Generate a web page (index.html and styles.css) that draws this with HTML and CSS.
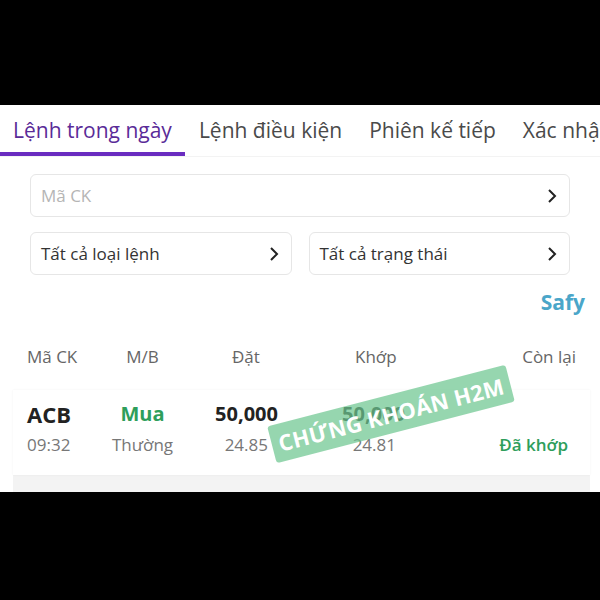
FILE: index.html
```html
<!DOCTYPE html>
<html lang="vi">
<head>
<meta charset="utf-8">
<link rel="stylesheet" href="styles.css">
</head>
<body>
<div class="bar-top"></div>
<main class="app">
  <nav class="tabs">
    <div class="tab active">Lệnh trong ngày</div>
    <div class="tab">Lệnh điều kiện</div>
    <div class="tab">Phiên kế tiếp</div>
    <div class="tab">Xác nhận lệnh</div>
  </nav>
  <section class="filters">
    <div class="field full">
      <span class="placeholder">Mã CK</span>
      <svg class="chev" width="10" height="16" viewBox="0 0 10 16"><path d="M2 2l6 6-6 6" fill="none" stroke="#222" stroke-width="2"/></svg>
    </div>
    <div class="row">
      <div class="field">
        <span>Tất cả loại lệnh</span>
        <svg class="chev" width="10" height="16" viewBox="0 0 10 16"><path d="M2 2l6 6-6 6" fill="none" stroke="#222" stroke-width="2"/></svg>
      </div>
      <div class="field">
        <span>Tất cả trạng thái</span>
        <svg class="chev" width="10" height="16" viewBox="0 0 10 16"><path d="M2 2l6 6-6 6" fill="none" stroke="#222" stroke-width="2"/></svg>
      </div>
    </div>
  </section>
  <div class="brand">Safy</div>
  <div class="thead">
    <span class="c1">Mã CK</span>
    <span class="c2">M/B</span>
    <span class="c3">Đặt</span>
    <span class="c4">Khớp</span>
    <span class="c5">Còn lại</span>
  </div>
  <div class="list">
    <div class="card">
      <div class="line l1">
        <span class="c1 sym">ACB</span>
        <span class="c2 buy">Mua</span>
        <span class="c3">50,000</span>
        <span class="c4">50,000</span>
        <span class="c5"></span>
      </div>
      <div class="line l2">
        <span class="c1">09:32</span>
        <span class="c2">Thường</span>
        <span class="c3">24.85</span>
        <span class="c4">24.81</span>
        <span class="c5 done">Đã khớp</span>
      </div>
    </div>
    <div class="watermark">CHỨNG KHOÁN H2M</div>
  </div>
</main>
<div class="bar-bottom"></div>
</body>
</html>
```
FILE: styles.css
```css
* { box-sizing: border-box; }
html, body { margin: 0; padding: 0; background: #000; }
body { width: 600px; height: 600px; overflow: hidden; font-family: "Open Sans", "Noto Sans", sans-serif; }
.bar-top { height: 105px; background: #000; }
.bar-bottom { height: 108px; background: #000; }
.app { height: 387px; background: #fff; overflow: hidden; display: flex; flex-direction: column; }

.tabs { display: flex; gap: 27px; padding-left: 13px; height: 52px; white-space: nowrap; overflow: hidden; border-bottom: 1px solid #f3f3f3; }
.tab { font-size: 21px; color: #4a4a4a; line-height: 50px; position: relative; flex: none; }
.tab.active { color: #5a2b98; }
.tab.active::after { content: ""; position: absolute; left: -13px; right: -13px; bottom: 0; height: 4px; background: #6a2cc0; }

.filters { padding: 17px 30px 0; display: flex; flex-direction: column; gap: 15px; }
.field { height: 43px; border: 1px solid #e6e6e6; border-radius: 6px; display: flex; align-items: center; justify-content: space-between; padding: 0 12px 0 10px; font-size: 17px; color: #333; }
.placeholder { color: #b5b5b5; }
.row { display: flex; gap: 17px; }
.row .field { flex: 1; }
.chev { flex: none; }

.brand { align-self: flex-end; margin: 13px 15px 0 0; font-size: 21px; font-weight: 700; color: #4aa6c9; line-height: 28px; }

.thead, .line { display: grid; grid-template-columns: 73px 85px 95px 130px 1fr; }
.thead { padding: 29px 24px 0 27px; font-size: 17px; color: #666; line-height: 24px; }
.c1 { text-align: left; }
.c2 { text-align: center; }
.c3, .c4, .c5 { text-align: right; }
.thead .c3 { text-align: left; padding-left: 47px; }
.thead .c4 { text-align: left; padding-left: 75px; }

.list { position: relative; margin-top: 21px; flex: 1; background: #f3f3f3; margin-left: 13px; margin-right: 10px; }
.card { background: #fff; height: 85px; padding: 10px 22px 0 14px; box-shadow: 0 0 2px rgba(0,0,0,0.06); }
.line.l1 { font-size: 20px; font-weight: 700; color: #222; line-height: 28px; }
.sym { font-size: 22px; }
.l1 .c2 { color: #2e9e5b; }
.l1 .c3 { padding-right: 2px; }
.l1 .c4 { padding-right: 5px; }
.line.l2 { font-size: 17px; color: #777; line-height: 28px; margin-top: 3px; }
.l2 .c3 { padding-right: 12px; }
.l2 .c4 { padding-right: 14px; }
.done { color: #2e9e5b; font-weight: 600; }

.watermark { position: absolute; left: 255px; top: 5px; width: 246px; height: 38px; background: rgba(110, 198, 144, 0.72); color: #fff; font-size: 22px; font-weight: 700; line-height: 38px; text-align: center; border-radius: 3px; transform: rotate(-14.5deg); letter-spacing: 0.3px; }
```
